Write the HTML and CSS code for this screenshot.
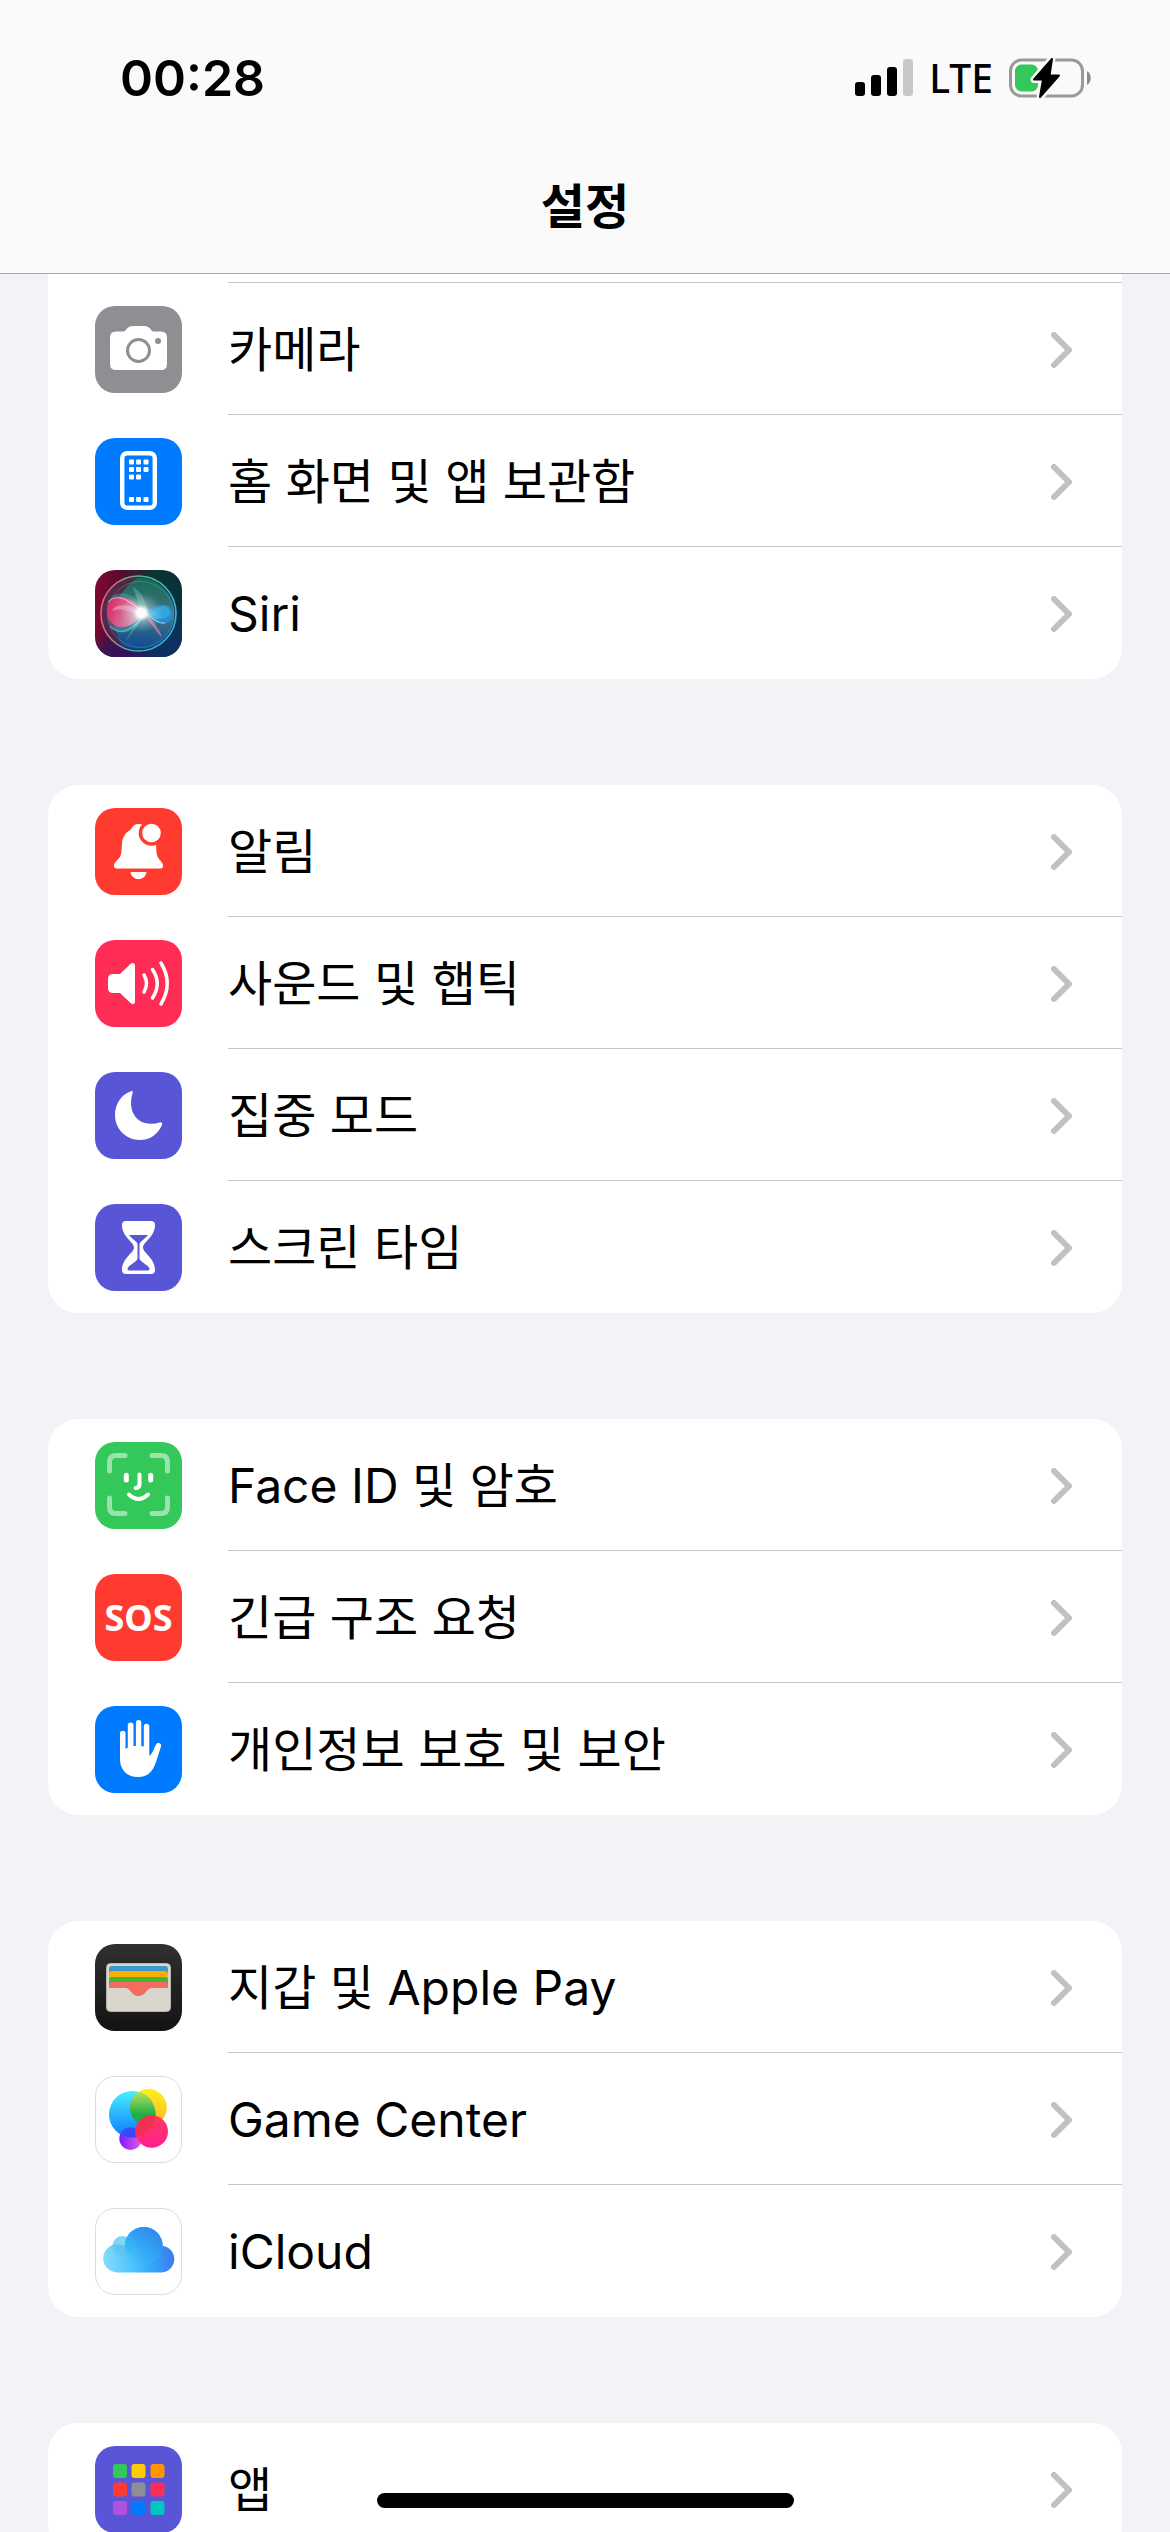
FILE: index.html
```html
<!DOCTYPE html>
<html lang="ko">
<head>
<meta charset="utf-8">
<meta name="viewport" content="width=device-width, initial-scale=1">
<title>설정</title>
<link rel="stylesheet" href="styles.css">
</head>
<body>
<svg class="sprite" aria-hidden="true">
  <symbol id="chevron" viewBox="0 0 21 36">
    <path d="M3 3 L18 18 L3 33" fill="none" stroke="currentColor" stroke-width="6" stroke-linecap="round" stroke-linejoin="round"/>
  </symbol>
</svg>
<div class="screen">
  <header class="header">
    <div class="status">
      <time class="status-time">00:28</time>
      <div class="status-right">
        <svg class="signal" viewBox="0 0 58 38" aria-hidden="true">
          <rect x="0" y="23" width="10" height="14" rx="3"/>
          <rect x="16" y="16" width="10" height="21" rx="3"/>
          <rect x="32" y="8" width="10" height="29" rx="3"/>
          <rect x="48" y="0" width="10" height="37" rx="3" fill="#c8c8c8"/>
        </svg>
        <span class="network">LTE</span>
        <svg class="battery" viewBox="0 0 82 42" aria-hidden="true">
          <rect x="1.500" y="3" width="72" height="36" rx="11" fill="none" stroke="#999" stroke-width="3"/>
          <path d="M78 14 C83 17 83 25 78 28 Z" fill="#8c8c8c"/>
          <rect x="6" y="7.500" width="23" height="27" rx="6.500" fill="#34c759"/>
          <path d="M43 1.500 L25 22.500 L34 22.500 L31 40.500 L50 18.500 L40.500 18.500 Z" fill="#000" stroke="#fafafa" stroke-width="7" stroke-linejoin="round"/>
          <path d="M43 2 L25 22.500 L34 22.500 L31 40 L50 18.500 L40.500 18.500 Z" fill="#000" stroke="#000" stroke-width="2" stroke-linejoin="round"/>
        </svg>
      </div>
    </div>
    <h1 class="title">설정</h1>
  </header>

  <main class="content">
    <ul class="group group-continued">
      <li><a class="row" href="#camera">
        <svg class="icon" viewBox="0 0 87 87" aria-hidden="true">
          <rect width="87" height="87" rx="20" fill="#8e8e93"/>
          <path d="M21 25.500 H28 C30 25.500 30.500 24.500 32 22.500 Q34 20 37 20 H50 Q53 20 55 22.500 C56.500 24.500 57 25.500 59 25.500 H66 Q72 25.500 72 31.500 V58 Q72 64 66 64 H21 Q15 64 15 58 V31.500 Q15 25.500 21 25.500 Z" fill="#fff"/>
          <circle cx="43.500" cy="44.500" r="11" fill="none" stroke="#8e8e93" stroke-width="3"/>
          <circle cx="63" cy="35" r="3" fill="#8e8e93"/>
        </svg>
        <span class="label">카메라</span>
        <svg class="chevron"><use href="#chevron"/></svg>
      </a></li>
      <li><a class="row" href="#home-screen">
        <svg class="icon" viewBox="0 0 87 87" aria-hidden="true">
          <rect width="87" height="87" rx="20" fill="#007aff"/>
          <rect x="27.200" y="15.200" width="32.600" height="54.600" rx="5" fill="none" stroke="#fff" stroke-width="4.400"/>
          <g fill="#fff">
            <rect x="34" y="21.500" width="5" height="5" rx="1"/><rect x="41" y="21.500" width="5" height="5" rx="1"/><rect x="48.500" y="21.500" width="5" height="5" rx="1"/>
            <rect x="34" y="29" width="5" height="5" rx="1"/><rect x="41" y="29" width="5" height="5" rx="1"/><rect x="48.500" y="29" width="5" height="5" rx="1"/>
            <rect x="34" y="36.500" width="5" height="5" rx="1"/><rect x="41" y="36.500" width="5" height="5" rx="1"/>
            <rect x="34" y="59" width="5" height="5" rx="1"/><rect x="41" y="59" width="5" height="5" rx="1"/><rect x="48.500" y="59" width="5" height="5" rx="1"/>
          </g>
        </svg>
        <span class="label">홈 화면 및 앱 보관함</span>
        <svg class="chevron"><use href="#chevron"/></svg>
      </a></li>
      <li><a class="row" href="#siri">
        <svg class="icon" viewBox="0 0 87 87" aria-hidden="true">
          <defs>
            <linearGradient id="siri-base" x1="0" y1="0.400" x2="1" y2="0.500">
              <stop offset="0" stop-color="#7a0a30"/><stop offset="0.250" stop-color="#5c0a30"/><stop offset="0.600" stop-color="#0c3434"/><stop offset="1" stop-color="#08303a"/>
            </linearGradient>
            <linearGradient id="siri-top" x1="0.300" y1="0.500" x2="0.500" y2="1">
              <stop offset="0.300" stop-color="#0c3b60" stop-opacity="0"/><stop offset="1" stop-color="#0e2f63"/>
            </linearGradient>
            <radialGradient id="siri-violet" cx="0.300" cy="1" r="0.400">
              <stop offset="0" stop-color="#3c0a5c"/><stop offset="1" stop-color="#3c0a5c" stop-opacity="0"/>
            </radialGradient>
            <linearGradient id="siri-orb" x1="0.600" y1="0" x2="0.500" y2="1">
              <stop offset="0" stop-color="#176a54"/><stop offset="0.500" stop-color="#437283"/><stop offset="1" stop-color="#0c4a94"/>
            </linearGradient>
            <linearGradient id="siri-ring" x1="0" y1="0.400" x2="1" y2="0.600">
              <stop offset="0" stop-color="#d8687c"/><stop offset="0.500" stop-color="#4bbba0"/><stop offset="1" stop-color="#38b0ea"/>
            </linearGradient>
            <linearGradient id="siri-pink" x1="0" y1="0" x2="1" y2="0.300">
              <stop offset="0" stop-color="#f01858"/><stop offset="1" stop-color="#f39ac0"/>
            </linearGradient>
            <radialGradient id="siri-glow">
              <stop offset="0" stop-color="#fff"/><stop offset="0.220" stop-color="#fff" stop-opacity="0.950"/><stop offset="0.420" stop-color="#e4fff8" stop-opacity="0.400"/><stop offset="1" stop-color="#9fe8dd" stop-opacity="0"/>
            </radialGradient>
          </defs>
          <rect width="87" height="87" rx="20" fill="url(#siri-base)"/>
          <rect width="87" height="87" rx="20" fill="url(#siri-top)"/>
          <rect width="87" height="87" rx="20" fill="url(#siri-violet)"/>
          <circle cx="43.500" cy="43.500" r="36" fill="url(#siri-orb)"/>
          <path d="M43.500 7.500 A36 36 0 0 0 30 77 C14 64 14 24 43.500 7.500 Z" fill="#5c1038" opacity="0.700"/>
          <circle cx="43.500" cy="43.500" r="37.500" fill="none" stroke="url(#siri-ring)" stroke-width="1.700"/>
          <circle cx="45.500" cy="44.500" r="33" fill="none" stroke="url(#siri-ring)" stroke-width="0.800" opacity="0.500"/>
          <path d="M50 43 C38 16 14 20 12 36 C9 70 40 70 50 43 Z" fill="#5cb4b8" opacity="0.350"/>
          <path d="M49 43 C40 28 24 22 13.500 33 C7 54 28 70 49 43 Z" fill="url(#siri-pink)" opacity="0.850"/>
          <path d="M47 43 C34 30 16 36 18 41 C28 36 38 45 47 43 Z" fill="#ffc1df" opacity="0.450"/>
          <path d="M15 56 C26 68 40 58 49 44" fill="none" stroke="#48c3c1" stroke-width="1.500" opacity="0.800"/>
          <path d="M51 43 C60 34 76 30 78 44 C76 58 62 56 51 43 Z" fill="#2295e2" opacity="0.800"/>
          <path d="M52 44 C60 42 65 33 72 37 C82 46 64 55 52 44 Z" fill="#45cdf0" opacity="0.400"/>
          <path d="M46 42 L38 17 Q50 24 52 40 Z M46 44 L30 72 L50 46 Z" fill="#b5ece1" opacity="0.280"/>
          <path d="M49 45 L66 67 Q68 64 53 45 Z" fill="#e583b4" opacity="0.650"/>
          <ellipse cx="46.500" cy="43" rx="21" ry="20" fill="url(#siri-glow)"/>
          <path d="M13 32 C26 20 38 36 50 43 C58 49 64 54 70 53" fill="none" stroke="#fff" stroke-width="1" opacity="0.600"/>
        </svg>
        <span class="label">Siri</span>
        <svg class="chevron"><use href="#chevron"/></svg>
      </a></li>
    </ul>

    <ul class="group">
      <li><a class="row" href="#notifications">
        <svg class="icon" viewBox="0 0 87 87" aria-hidden="true">
          <rect width="87" height="87" rx="20" fill="#ff3b30"/>
          <path d="M43.500 16 C39 16 37 19 36 21.500 C30 24.500 27 30 27 36 C26.500 43 26.500 46 25 49 C23 52 19 54 19 58 Q19 60.500 22 60.500 H65.500 Q68 60.500 68 58 C68 54 64 52 62.500 48.500 C61 45 61.500 41 61 36 C60 26 54 16 43.500 16 Z" fill="#fff"/>
          <circle cx="56.500" cy="25" r="12.800" fill="#ff3b30"/>
          <circle cx="56.500" cy="25" r="9.300" fill="#fff"/>
          <path d="M35.500 64 H51.500 C50.500 73.500 36.500 73.500 35.500 64 Z" fill="#fff"/>
        </svg>
        <span class="label">알림</span>
        <svg class="chevron"><use href="#chevron"/></svg>
      </a></li>
      <li><a class="row" href="#sounds">
        <svg class="icon" viewBox="0 0 87 87" aria-hidden="true">
          <rect width="87" height="87" rx="20" fill="#ff2d55"/>
          <path d="M18 34 H25 L35.500 24 Q37 22.500 38.500 23 Q40 23.500 40 25.500 V61.500 Q40 63.500 38.500 64 Q37 64.500 35.500 63 L25 53 H18 Q13 53 13 48 V39 Q13 34 18 34 Z" fill="#fff"/>
          <path d="M49 35 Q54 43.500 49 52 M57.500 29.500 Q67 43.500 57.500 58 M66 23 Q78.500 43.500 66 64" fill="none" stroke="#fff" stroke-width="3.500" stroke-linecap="round"/>
        </svg>
        <span class="label">사운드 및 햅틱</span>
        <svg class="chevron"><use href="#chevron"/></svg>
      </a></li>
      <li><a class="row" href="#focus">
        <svg class="icon" viewBox="0 0 87 87" aria-hidden="true">
          <rect width="87" height="87" rx="20" fill="#5856d6"/>
          <path d="M35.500 19.500 C37 18.500 38.500 19.500 37.500 21.500 C34 33 37 42 42.500 47 C48 52 57 53 64.500 50.500 C66.500 50 67.500 51 67 53 C63 62 55 68 45 68 C31 68 20 57 20 43 C20 32 26 23 35.500 19.500 Z" fill="#fff"/>
        </svg>
        <span class="label">집중 모드</span>
        <svg class="chevron"><use href="#chevron"/></svg>
      </a></li>
      <li><a class="row" href="#screen-time">
        <svg class="icon" viewBox="0 0 87 87" aria-hidden="true">
          <rect width="87" height="87" rx="20" fill="#5856d6"/>
          <path d="M31 17 H56 Q60 17 60 21 C60 33 48 38 48 43.500 C48 49 60 54 60 66 Q60 70 56 70 H31 Q27 70 27 66 C27 54 39 49 39 43.500 C39 38 27 33 27 21 Q27 17 31 17 Z" fill="#fff"/>
          <path d="M34 31 H53 C50 35 44.500 38 44.500 40 V55 C47 59 53 61 54.500 64.500 Q55 66.500 53 66.500 H34 Q32 66.500 32.500 64.500 C34 61 40 59 42.500 55 V40 C42.500 38 37 35 34 31 Z" fill="#5856d6"/>
        </svg>
        <span class="label">스크린 타임</span>
        <svg class="chevron"><use href="#chevron"/></svg>
      </a></li>
    </ul>

    <ul class="group">
      <li><a class="row" href="#face-id">
        <svg class="icon" viewBox="0 0 87 87" aria-hidden="true">
          <rect width="87" height="87" rx="20" fill="#34c759"/>
          <path d="M14.500 29 V20 Q14.500 13.500 21 13.500 H30 M57 13.500 H66 Q72.500 13.500 72.500 20 V29 M72.500 56 V65 Q72.500 71.500 66 71.500 H57 M30 71.500 H21 Q14.500 71.500 14.500 65 V56" fill="none" stroke="#9ae3ac" stroke-width="5" stroke-linecap="round"/>
          <path d="M31.300 33.300 V38 M55.700 33.300 V38" stroke="#fff" stroke-width="5" stroke-linecap="round"/>
          <path d="M44.500 32.500 V42 Q44.500 46 40.500 46" fill="none" stroke="#fff" stroke-width="4" stroke-linecap="round"/>
          <path d="M34 52.500 Q43.500 61.500 53 52.500" fill="none" stroke="#fff" stroke-width="4" stroke-linecap="round"/>
        </svg>
        <span class="label">Face ID 및 암호</span>
        <svg class="chevron"><use href="#chevron"/></svg>
      </a></li>
      <li><a class="row" href="#sos">
        <span class="icon icon-sos" aria-hidden="true">SOS</span>
        <span class="label">긴급 구조 요청</span>
        <svg class="chevron"><use href="#chevron"/></svg>
      </a></li>
      <li><a class="row" href="#privacy">
        <svg class="icon" viewBox="0 0 87 87" aria-hidden="true">
          <rect width="87" height="87" rx="20" fill="#007aff"/>
          <path d="M25 27.500 a2.750 2.750 0 0 1 5.500 0 V43 L32.800 41.500 V19.300 a2.850 2.850 0 0 1 5.700 0 V40 H40.900 V16.800 a2.700 2.700 0 0 1 5.400 0 V40 L48.800 40.500 V20.500 a2.750 2.750 0 0 1 5.500 0 V50 C58 47 59 42 61 38.500 C63 35.500 67 37.500 66 40.500 L61 56 C58 65 53 71 43 71 C32 71 25 64 25 53 Z" fill="#fff"/>
        </svg>
        <span class="label">개인정보 보호 및 보안</span>
        <svg class="chevron"><use href="#chevron"/></svg>
      </a></li>
    </ul>

    <ul class="group">
      <li><a class="row" href="#wallet">
        <svg class="icon" viewBox="0 0 87 87" aria-hidden="true">
          <defs>
            <linearGradient id="wallet-bg" x1="0" y1="0" x2="0" y2="1"><stop offset="0" stop-color="#303030"/><stop offset="1" stop-color="#131313"/></linearGradient>
          </defs>
          <rect width="87" height="87" rx="20" fill="url(#wallet-bg)"/>
          <rect x="11.500" y="19.500" width="64" height="48" rx="4" fill="#d9d6ce" stroke="#b9b5a9"/>
          <path d="M14 44 V25 Q14 22 17 22 H70 Q73 22 73 25 V44 Z" fill="#3b99c9"/>
          <path d="M14 44 V30 Q14 27 17 27 H70 Q73 27 73 30 V44 Z" fill="#ffad00"/>
          <path d="M14 44 V36 Q14 33 17 33 H70 Q73 33 73 36 V44 Z" fill="#45b52f"/>
          <path d="M14 44 V41 Q14 38 17 38 H70 Q73 38 73 41 V44 H57 C51 44 51 52 43.500 52 C36 52 36 44 30 44 Z" fill="#f26d5f"/>
        </svg>
        <span class="label">지갑 및 Apple Pay</span>
        <svg class="chevron"><use href="#chevron"/></svg>
      </a></li>
      <li><a class="row" href="#game-center">
        <svg class="icon" viewBox="0 0 87 87" aria-hidden="true">
          <defs>
            <linearGradient id="gc-blue" x1="0" y1="0" x2="0" y2="1"><stop offset="0" stop-color="#48efff"/><stop offset="1" stop-color="#0a78ff"/></linearGradient>
            <linearGradient id="gc-yellow" x1="0" y1="0" x2="0" y2="1"><stop offset="0" stop-color="#fff01a"/><stop offset="1" stop-color="#ffb22a"/></linearGradient>
            <linearGradient id="gc-green" x1="0" y1="0" x2="0" y2="1"><stop offset="0" stop-color="#c9e860"/><stop offset="0.700" stop-color="#1cae48"/><stop offset="1" stop-color="#1cae48"/></linearGradient>
            <linearGradient id="gc-purple" x1="0" y1="0" x2="1" y2="0"><stop offset="0" stop-color="#7c1cff"/><stop offset="1" stop-color="#e25be8"/></linearGradient>
            <linearGradient id="gc-pink" x1="0" y1="0" x2="0" y2="1"><stop offset="0" stop-color="#ff3b5c"/><stop offset="1" stop-color="#ff1f92"/></linearGradient>
            <clipPath id="gc-clip"><circle cx="37.300" cy="38.300" r="23.300"/></clipPath>
          </defs>
          <rect x="0.500" y="0.500" width="86" height="86" rx="19.500" fill="#fff" stroke="#dcdcdc"/>
          <circle cx="35.600" cy="62.600" r="11.300" fill="url(#gc-purple)"/>
          <circle cx="53.300" cy="31.500" r="18.500" fill="url(#gc-yellow)"/>
          <circle cx="37.300" cy="38.300" r="23.300" fill="url(#gc-blue)"/>
          <g clip-path="url(#gc-clip)">
            <circle cx="35.600" cy="62.600" r="11.300" fill="#4a30f5" opacity="0.700"/>
            <circle cx="53.300" cy="31.500" r="18.500" fill="url(#gc-green)"/>
          </g>
          <circle cx="56.700" cy="55.500" r="16.300" fill="url(#gc-pink)"/>
          <g clip-path="url(#gc-clip)"><circle cx="56.700" cy="55.500" r="16.300" fill="#ec3148" opacity="0.800"/></g>
        </svg>
        <span class="label">Game Center</span>
        <svg class="chevron"><use href="#chevron"/></svg>
      </a></li>
      <li><a class="row" href="#icloud">
        <svg class="icon" viewBox="0 0 87 87" aria-hidden="true">
          <defs>
            <linearGradient id="cloud" gradientUnits="userSpaceOnUse" x1="8" y1="56" x2="79" y2="44"><stop offset="0" stop-color="#8adcf8"/><stop offset="0.400" stop-color="#4cc4fd"/><stop offset="0.650" stop-color="#34a8f8"/><stop offset="1" stop-color="#3c78f0"/></linearGradient>
            <linearGradient id="cloud-top" gradientUnits="userSpaceOnUse" x1="36" y1="54" x2="60" y2="24"><stop offset="0" stop-color="#40bdfc" stop-opacity="0"/><stop offset="0.500" stop-color="#33a6f5"/><stop offset="1" stop-color="#318bea"/></linearGradient>
            <clipPath id="cloud-left"><circle cx="27.300" cy="38" r="10"/></clipPath>
          </defs>
          <rect x="0.500" y="0.500" width="86" height="86" rx="19.500" fill="#fff" stroke="#dcdcdc"/>
          <circle cx="27.300" cy="38" r="10" fill="#82d3f5"/>
          <path d="M22.300 36.300 C30 36.300 32 40 40 50 H60 C60 42 64 37.700 66 37.700 A13.400 13.400 0 0 1 65.700 64.500 H22.300 A14.100 14.100 0 0 1 22.300 36.300 Z" fill="url(#cloud)"/>
          <circle cx="48.700" cy="38" r="19" fill="url(#cloud)"/>
          <circle cx="48.700" cy="38" r="19" fill="url(#cloud-top)"/>
          <g clip-path="url(#cloud-left)"><circle cx="48.700" cy="38" r="19" fill="#2cb4ef" opacity="0.600"/><circle cx="22.300" cy="50.500" r="14.200" fill="#5cc0ee" opacity="0.500"/></g>
        </svg>
        <span class="label">iCloud</span>
        <svg class="chevron"><use href="#chevron"/></svg>
      </a></li>
    </ul>

    <ul class="group">
      <li><a class="row" href="#apps">
        <svg class="icon" viewBox="0 0 87 87" aria-hidden="true">
          <rect width="87" height="87" rx="20" fill="#5856d6"/>
          <rect x="18" y="18" width="14" height="14" rx="3" fill="#34c759"/>
          <rect x="36.500" y="18" width="14" height="14" rx="3" fill="#ffcc00"/>
          <rect x="55.500" y="18" width="14" height="14" rx="3" fill="#ff9500"/>
          <rect x="18" y="36.500" width="14" height="14" rx="3" fill="#ff3b30"/>
          <rect x="36.500" y="36.500" width="14" height="14" rx="3" fill="#8e8e93"/>
          <rect x="55.500" y="36.500" width="14" height="14" rx="3" fill="#ff2d55"/>
          <rect x="18" y="55" width="14" height="14" rx="3" fill="#af52de"/>
          <rect x="36.500" y="55" width="14" height="14" rx="3" fill="#007aff"/>
          <rect x="55.500" y="55" width="14" height="14" rx="3" fill="#00c7be"/>
        </svg>
        <span class="label">앱</span>
        <svg class="chevron"><use href="#chevron"/></svg>
      </a></li>
    </ul>
  </main>
  <div class="home-indicator"></div>
</div>
</body>
</html>
```
FILE: styles.css
```css
* {
  box-sizing: border-box;
}

body {
  margin: 0;
  background: #f2f2f7;
  color: #000;
  font-family: Inter, "Noto Sans CJK KR", sans-serif;
}

.sprite {
  display: none;
}

.screen {
  display: flex;
  flex-direction: column;
  height: 100vh;
  overflow: hidden;
}

.header {
  flex: none;
  background: #fafafa;
  border-bottom: 1px solid #a9a9ac;
}

.status {
  display: flex;
  align-items: center;
  justify-content: space-between;
  height: 141px;
  padding: 14px 79px 0 120px;
}

.status-time {
  font-size: 50px;
  font-weight: 600;
  line-height: 60px;
}

.status-right {
  display: flex;
  align-items: center;
  gap: 16px;
}

.signal {
  width: 58px;
  height: 38px;
}

.network {
  font-family: "Noto Sans", sans-serif;
  font-size: 39px;
  font-weight: 500;
  line-height: 48px;
}

.battery {
  width: 82px;
  height: 42px;
}

.title {
  margin: 0;
  font-size: 48px;
  font-weight: 700;
  line-height: 132px;
  text-align: center;
}

.content {
  flex: 1;
  min-height: 0;
  padding: 0 48px;
  overflow: hidden;
}

.group {
  margin: 0 0 106px;
  padding: 0;
  list-style: none;
  background: #fff;
  border-radius: 30px;
}

.group-continued {
  padding-top: 8px;
  border-radius: 0 0 30px 30px;
}

.row {
  display: flex;
  align-items: center;
  height: 132px;
  padding: 1px 50px 0 47px;
  color: inherit;
  text-decoration: none;
  background: linear-gradient(#c6c6c8, #c6c6c8) 180px 100% / 100% 1px no-repeat;
}

.group > li:last-child .row {
  background: none;
}

.group-continued::before {
  content: "";
  display: block;
  height: 1px;
  margin-left: 180px;
  background: #c6c6c8;
}

.icon {
  flex: none;
  width: 87px;
  height: 87px;
}

.icon-sos {
  border-radius: 20px;
  background: #ff3b30;
  color: #fff;
  font-family: "Noto Sans", sans-serif;
  font-size: 36px;
  font-weight: 700;
  line-height: 87px;
  text-align: center;
}

.label {
  flex: 1;
  padding-left: 46px;
  font-size: 48px;
  line-height: 72px;
  white-space: nowrap;
}

.chevron {
  flex: none;
  width: 21px;
  height: 36px;
  color: #c1c1c3;
}

.home-indicator {
  position: fixed;
  bottom: 24px;
  left: 50%;
  width: 417px;
  height: 15px;
  margin-left: -208px;
  border-radius: 8px;
  background: #000;
}
```
